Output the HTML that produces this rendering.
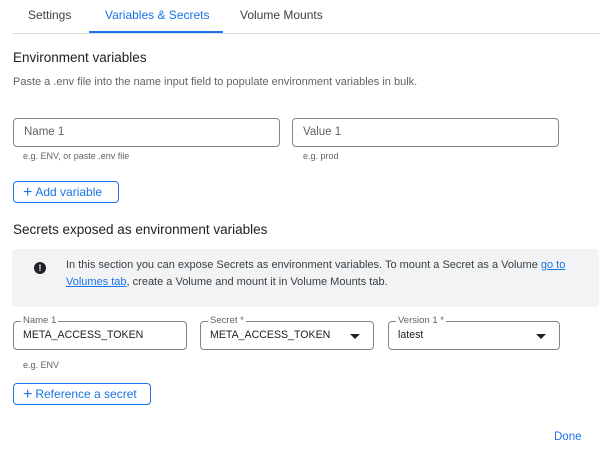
<!DOCTYPE html><html><head><style>
*{margin:0;padding:0;box-sizing:border-box}
body{width:609px;height:458px;background:#fff;font-family:"Liberation Sans",sans-serif;position:relative;overflow:hidden;color:#202124}
.a{position:absolute;white-space:nowrap}
.box{position:absolute;border:1px solid #80868b;border-radius:4px;height:29px}
.ph{position:absolute;left:10px;top:7px;font-size:11.5px;color:#5f6368}
.hint{font-size:9px;color:#5f6368}
.btn{position:absolute;border:1px solid #1a73e8;border-radius:4px;color:#1a73e8;font-size:12px;padding-left:9px;line-height:20px;height:22px}
.btn b{font-size:16px;font-weight:normal;vertical-align:-1px;margin-right:3px}
.lab{position:absolute;top:-7px;left:7px;background:#fff;padding:0 2px;font-size:9.5px;color:#5f6368}
.val{position:absolute;left:9px;top:7px;font-size:10.6px;color:#202124}
.tri{position:absolute;right:13px;top:12px;width:0;height:0;border-left:5px solid transparent;border-right:5px solid transparent;border-top:5px solid #202124}
</style></head><body>
<div class="a" style="left:28px;top:8px;font-size:12px;color:#3c4043">Settings</div>
<div class="a" style="left:105px;top:8px;font-size:12px;color:#1a73e8">Variables &amp; Secrets</div>
<div class="a" style="left:240px;top:8px;font-size:12px;color:#3c4043">Volume Mounts</div>
<div class="a" style="left:12px;top:33px;width:588px;height:1px;background:#dadce0"></div>
<div class="a" style="left:89px;top:31px;width:134px;height:2px;background:#1a73e8"></div>
<div class="a" style="left:13px;top:50px;font-size:13.5px">Environment variables</div>
<div class="a" style="left:13px;top:76px;font-size:11px;color:#5f6368">Paste a .env file into the name input field to populate environment variables in bulk.</div>
<div class="box" style="left:13px;top:118px;width:267px"><div class="ph">Name 1</div></div>
<div class="box" style="left:292px;top:118px;width:267px"><div class="ph">Value 1</div></div>
<div class="a hint" style="left:23px;top:151px">e.g. ENV, or paste .env file</div>
<div class="a hint" style="left:303px;top:151px">e.g. prod</div>
<div class="btn" style="left:13px;top:181px;width:106px"><b>+</b>Add variable</div>
<div class="a" style="left:13px;top:222px;font-size:13.5px">Secrets exposed as environment variables</div>
<div class="a" style="left:12px;top:249px;width:587px;height:58px;background:#f1f3f4;border-radius:4px"></div>
<div class="a" style="left:34px;top:262px;width:12px;height:12px;border-radius:50%;background:#202124;color:#fff;font-size:9px;font-weight:bold;line-height:12px;text-align:center">!</div>
<div class="a" style="left:66px;top:257px;font-size:11px;line-height:17px;color:#3c4043">In this section you can expose Secrets as environment variables. To mount a Secret as a Volume <span style="color:#1a73e8;text-decoration:underline">go to</span><br><span style="color:#1a73e8;text-decoration:underline">Volumes tab</span>, create a Volume and mount it in Volume Mounts tab.</div>
<div class="box" style="left:13px;top:321px;width:174px"><div class="lab">Name 1</div><div class="val">META_ACCESS_TOKEN</div></div>
<div class="box" style="left:200px;top:321px;width:174px"><div class="lab">Secret *</div><div class="val">META_ACCESS_TOKEN</div><div class="tri"></div></div>
<div class="box" style="left:388px;top:321px;width:172px"><div class="lab">Version 1 *</div><div class="val">latest</div><div class="tri"></div></div>
<div class="a hint" style="left:23px;top:360px">e.g. ENV</div>
<div class="btn" style="left:13px;top:383px;width:138px"><b>+</b>Reference a secret</div>
<div class="a" style="left:554px;top:431px;font-size:11.5px;color:#1a73e8">Done</div>
</body></html>
